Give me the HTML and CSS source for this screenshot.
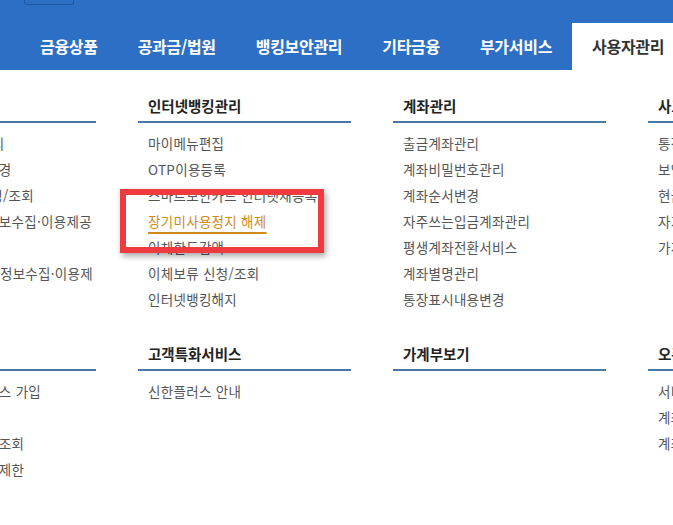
FILE: index.html
```html
<!DOCTYPE html>
<html lang="ko">
<head>
    <meta charset="UTF-8">
    <meta name="viewport" content="width=device-width, initial-scale=1.0">
    <title>사용자관리</title>
    <link rel="stylesheet" href="styles.css">
</head>
<body>
    <header class="gnb">
        <div class="gnb-top"><span class="util-box"></span></div>
        <nav class="gnb-menu">
            <a href="#">금융상품</a>
            <a href="#">공과금/법원</a>
            <a href="#">뱅킹보안관리</a>
            <a href="#">기타금융</a>
            <a href="#">부가서비스</a>
            <a href="#" class="on">사용자관리</a>
        </nav>
    </header>

    <div class="mega">
        <div class="col">
            <h3>고객정보관리</h3>
            <ul>
                <li><a href="#">고객정보 조회/관리</a></li>
                <li><a href="#">로그인 비밀번호변경</a></li>
                <li><a href="#">전자우편 수신 신청/조회</a></li>
                <li><a href="#">마케팅목적 개인정보수집·이용제공 동의</a></li>
                <li><a href="#">타 기관 개인(신용)정보수집·이용제공 동의</a></li>
            </ul>
        </div>
        <div class="col">
            <h3>인터넷뱅킹관리</h3>
            <ul>
                <li><a href="#">마이메뉴편집</a></li>
                <li><a href="#">OTP이용등록</a></li>
                <li><a href="#">스마트보안카드 인터넷재등록</a></li>
                <li class="current"><a href="#">장기미사용정지 해제</a><span class="mark"></span></li>
                <li><a href="#">이체한도감액</a></li>
                <li><a href="#">이체보류 신청/조회</a></li>
                <li><a href="#">인터넷뱅킹해지</a></li>
            </ul>
        </div>
        <div class="col">
            <h3>계좌관리</h3>
            <ul>
                <li><a href="#">출금계좌관리</a></li>
                <li><a href="#">계좌비밀번호관리</a></li>
                <li><a href="#">계좌순서변경</a></li>
                <li><a href="#">자주쓰는입금계좌관리</a></li>
                <li><a href="#">평생계좌전환서비스</a></li>
                <li><a href="#">계좌별명관리</a></li>
                <li><a href="#">통장표시내용변경</a></li>
            </ul>
        </div>
        <div class="col">
            <h3>사고신고</h3>
            <ul>
                <li><a href="#">통장/인감 사고신고</a></li>
                <li><a href="#">보안매체 사고신고</a></li>
                <li><a href="#">현금카드 사고신고</a></li>
                <li><a href="#">자기앞수표 사고신고</a></li>
                <li><a href="#">가계수표 사고신고</a></li>
            </ul>
        </div>

        <div class="col">
            <h3>보안서비스</h3>
            <ul>
                <li><a href="#">기기지정 안심서비스 가입</a></li>
                <li><a href="#">접속이력조회</a></li>
                <li><a href="#">해외접속 차단내역조회</a></li>
                <li><a href="#">비대면 이용시간대제한</a></li>
            </ul>
        </div>
        <div class="col">
            <h3>고객특화서비스</h3>
            <ul>
                <li><a href="#">신한플러스 안내</a></li>
            </ul>
        </div>
        <div class="col">
            <h3>가계부보기</h3>
            <ul></ul>
        </div>
        <div class="col">
            <h3>오픈뱅킹</h3>
            <ul>
                <li><a href="#">서비스 가입/해지</a></li>
                <li><a href="#">계좌 등록/관리</a></li>
                <li><a href="#">계좌 조회</a></li>
            </ul>
        </div>
    </div>
</body>
</html>
```

FILE: styles.css
```css
body {
    margin: 0;
    background-color: #fff;
    font-family: "Noto Sans CJK KR", "Noto Sans", sans-serif;
    overflow: hidden;
}
.gnb {
    background-color: #2d6fc4;
    height: 70px;
}
.gnb-top {
    height: 23px;
}
.util-box {
    display: block;
    width: 48px;
    height: 4px;
    margin-left: 24px;
    border: 1px solid #2257a0;
    border-top: 0;
    border-radius: 0 0 3px 3px;
}
.gnb-menu {
    display: flex;
    height: 47px;
    padding-left: 20px;
    white-space: nowrap;
}
.gnb-menu a {
    flex-shrink: 0;
    padding: 0 20px;
    line-height: 47px;
    color: #fff;
    font-size: 16px;
    font-weight: 700;
    letter-spacing: -0.3px;
    text-decoration: none;
}
.gnb-menu a.on {
    background-color: #fff;
    color: #333;
}
.mega {
    display: grid;
    grid-template-columns: repeat(4, 213px);
    column-gap: 42px;
    row-gap: 32px;
    width: max-content;
    margin-left: -117px;
    padding-top: 26px;
}
.col h3 {
    margin: 0;
    padding: 0 10px 5px;
    border-bottom: 2px solid #4a78a6;
    color: #222;
    font-size: 14.5px;
    font-weight: 700;
    line-height: 20px;
}
.col ul {
    list-style: none;
    margin: 0;
    padding: 7px 0 0 10px;
}
.col li {
    line-height: 26px;
    font-size: 13.5px;
    letter-spacing: 0.3px;
}
.col li a {
    color: #555;
    text-decoration: none;
}
.col li.current {
    position: relative;
}
.col li.current a {
    color: #d2891b;
    text-decoration: underline;
    text-decoration-thickness: 2px;
    text-underline-offset: 5px;
}
.mark {
    position: absolute;
    top: -19px;
    left: -28px;
    width: 204px;
    height: 64px;
    box-sizing: border-box;
    border: 6px solid #ef3b3f;
    box-shadow: 2px 3px 6px rgba(0, 0, 0, 0.35);
    z-index: 2;
}
```
